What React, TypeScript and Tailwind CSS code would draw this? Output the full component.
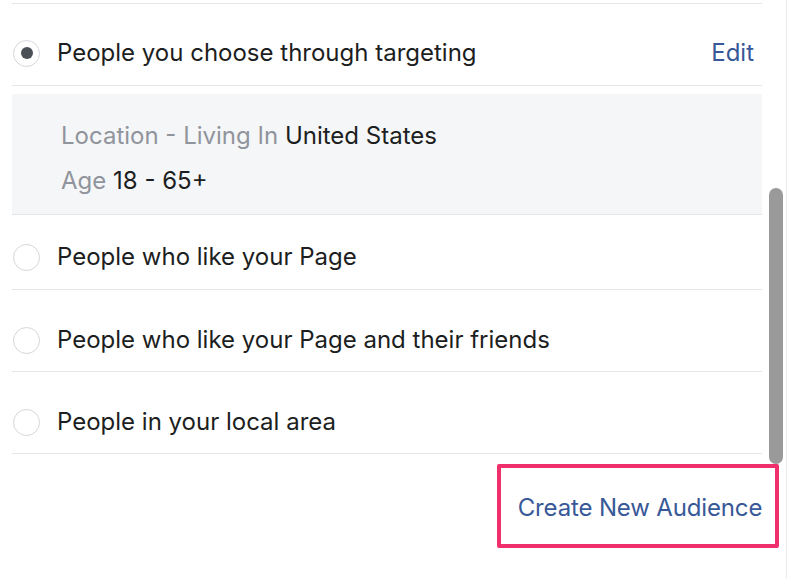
import React from "react";

function Radio({ checked }: { checked?: boolean }) {
  return (
    <div className="w-[27px] h-[27px] rounded-full border-[1.5px] border-[#d3d6db] bg-white flex items-center justify-center shrink-0">
      {checked && <div className="w-[12px] h-[12px] rounded-full bg-[#4b4f56]" />}
    </div>
  );
}

function Row({ label, pt, pb, checked, edit }: { label: string; pt: string; pb: string; checked?: boolean; edit?: boolean }) {
  return (
    <div className={`flex items-center border-b border-[#e4e6e9] ${pt} ${pb}`}>
      <div className="pl-[1px]">
        <Radio checked={checked} />
      </div>
      <div className="ml-[17px] flex-1 text-[24px] leading-[30px] text-[#1c1e21]">{label}</div>
      {edit && <div className="text-[24px] leading-[30px] text-[#385898] pr-[8px]">Edit</div>}
    </div>
  );
}

export default function App() {
  return (
    <div
      className="w-[788px] h-[579px] bg-white flex overflow-hidden"
      style={{ fontFamily: "Inter, 'Noto Sans', sans-serif" }}
    >
      <div className="w-[750px] ml-[12px] flex flex-col">
        <div className="h-[3px]" />
        <div className="border-t border-[#e4e6e9]" />
        <Row label="People you choose through targeting" checked edit pt="pt-[34px]" pb="pb-[17px]" />
        <div className="mt-[8px] bg-[#f5f6f7] border-b border-[#e4e6e9] pl-[49px] pt-[27px] pb-[18px] text-[24px]">
          <div className="leading-[30px]">
            <span className="text-[#90949c]">Location - Living In </span>
            <span className="text-[#1c1e21]">United States</span>
          </div>
          <div className="mt-[15px] leading-[30px]">
            <span className="text-[#90949c]">Age </span>
            <span className="text-[#1c1e21]">18 - 65+</span>
          </div>
        </div>
        <Row label="People who like your Page" pt="pt-[27px]" pb="pb-[17px]" />
        <Row label="People who like your Page and their friends" pt="pt-[35px]" pb="pb-[16px]" />
        <Row label="People in your local area" pt="pt-[35px]" pb="pb-[16px]" />
        <div className="flex justify-end mt-[10px] mr-[-17px]">
          <div className="border-[4px] border-[#f0306d] rounded-[2px] w-[282px] h-[84px] flex items-center justify-center pl-[4px] pt-[3px] text-[24px] tracking-[-0.15px] text-[#385898]">
            Create New Audience
          </div>
        </div>
      </div>
      <div className="ml-[7px] w-[15px] flex flex-col">
        <div className="h-[188px]" />
        <div className="h-[276px] w-[14px] rounded-full bg-[#9a9a9a]" />
      </div>
      <div className="ml-[2px] w-[1px] bg-[#ececec]" />
    </div>
  );
}
